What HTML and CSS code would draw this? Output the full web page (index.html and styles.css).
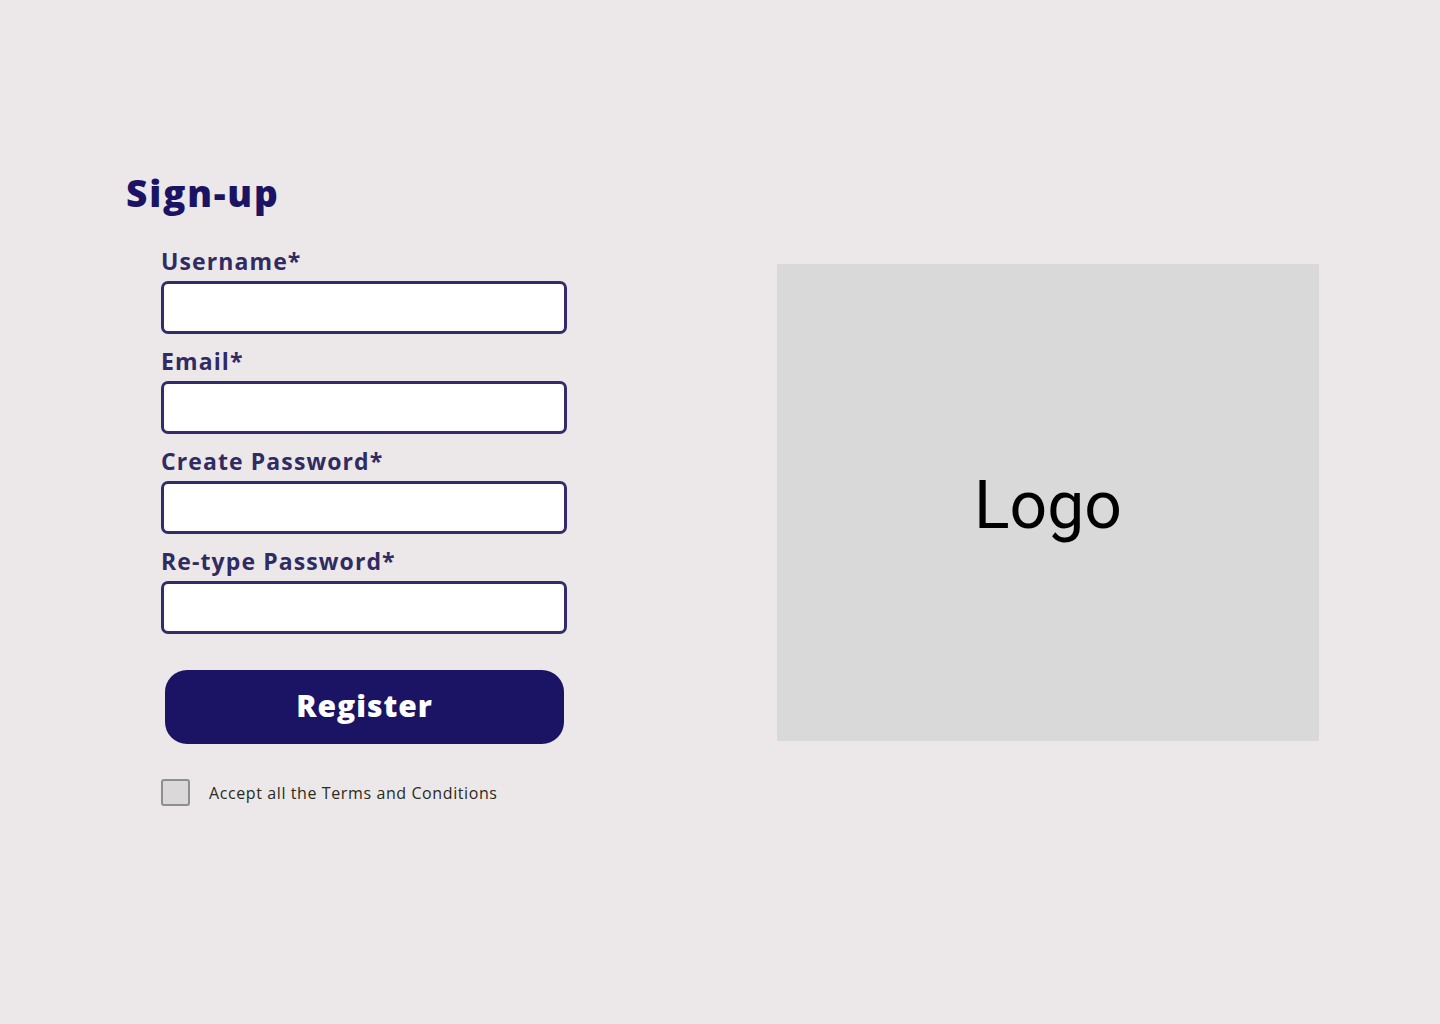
FILE: index.html
```html
<!DOCTYPE html>
<html lang="en">
<head>
<meta charset="utf-8">
<title>Sign-up</title>
<link rel="stylesheet" href="styles.css">
</head>
<body>
<main class="page">
  <section class="form-col">
    <h1 class="title">Sign-up</h1>
    <form class="form">
      <div class="field">
        <label class="label" for="u">Username*</label>
        <input class="input" id="u" type="text">
      </div>
      <div class="field">
        <label class="label" for="e">Email*</label>
        <input class="input" id="e" type="email">
      </div>
      <div class="field">
        <label class="label" for="p1">Create Password*</label>
        <input class="input" id="p1" type="password">
      </div>
      <div class="field">
        <label class="label" for="p2">Re-type Password*</label>
        <input class="input" id="p2" type="password">
      </div>
      <button class="register" type="button">Register</button>
      <label class="terms">
        <span class="check"></span>
        <span class="terms-text">Accept all the Terms and Conditions</span>
      </label>
    </form>
  </section>
  <aside class="logo-box">
    <span class="logo-text">Logo</span>
  </aside>
</main>
</body>
</html>
```
FILE: styles.css
```css
* { box-sizing: border-box; }
html, body { margin: 0; padding: 0; }
body {
  background: #ece8e9;
  width: 1440px;
  height: 1024px;
  font-family: "Open Sans", "Noto Sans", sans-serif;
}
.page {
  display: flex;
  align-items: flex-start;
  padding: 169px 0 0 126px;
}
.form-col { width: 441px; }
.title {
  margin: 0;
  font-size: 37px;
  line-height: 48px;
  font-weight: 800;
  color: #1b1464;
  letter-spacing: 1.8px;
}
.form {
  margin: 30px 0 0 35px;
  display: flex;
  flex-direction: column;
}
.field {
  display: flex;
  flex-direction: column;
  margin-bottom: 13px;
}
.label {
  font-size: 23px;
  line-height: 28px;
  font-weight: 700;
  color: #302b63;
  margin-bottom: 6px;
  letter-spacing: 1.1px;
}
.input {
  width: 406px;
  height: 53px;
  border: 3px solid #332c6b;
  border-radius: 7px;
  background: #ffffff;
  margin: 0;
  outline: none;
}
.register {
  margin: 23px 0 0 4px;
  width: 399px;
  height: 74px;
  border: none;
  border-radius: 22px;
  background: #1b1464;
  color: #ffffff;
  font-family: inherit;
  font-size: 30px;
  font-weight: 800;
  letter-spacing: 1px;
  padding: 0 0 4px;
}
.terms {
  display: flex;
  align-items: center;
  margin-top: 35px;
}
.check {
  width: 29px;
  height: 27px;
  background: #d9d9d9;
  border: 2px solid #8f8f8f;
  border-radius: 3px;
}
.terms-text {
  margin-left: 19px;
  font-size: 16px;
  color: #2b2a1c;
  letter-spacing: 0.6px;
}
.logo-box {
  margin: 95px 0 0 210px;
  width: 542px;
  height: 477px;
  background: #d9d9d9;
  display: flex;
  align-items: center;
  justify-content: center;
}
.logo-text {
  font-family: Roboto, sans-serif;
  font-size: 66px;
  color: #000000;
  margin-top: 6px;
}
```
